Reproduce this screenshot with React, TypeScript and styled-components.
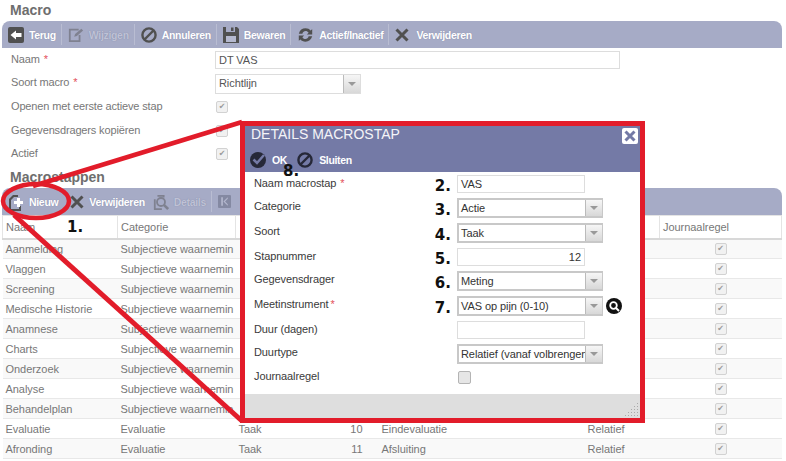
import React from "react";
import styled, { createGlobalStyle } from "styled-components";

const Global = createGlobalStyle`
  html, body { margin: 0; padding: 0; background: #fff; }
  body { font-family: "Liberation Sans", Arial, sans-serif; font-size: 11px; color: #777; }
`;

const Page = styled.div`
  position: relative;
  width: 786px;
  height: 461px;
  overflow: hidden;
  padding: 0 4px 0 2px;
  box-sizing: border-box;
`;
const Title = styled.h2`
  margin: 0;
  padding: 2px 0 0 8px;
  font-size: 14px;
  line-height: 16px;
  font-weight: bold;
  color: #6e6e6e;
  height: 21px;
  box-sizing: border-box;
`;
const SectionTitle = styled(Title)`
  height: 20px;
  padding-top: 1px;
`;
const Toolbar = styled.div`
  display: flex;
  align-items: center;
  height: 27px;
  background: #a6abc6;
  border-radius: 8px 8px 0 0;
  padding-left: 6px;
`;
const ToolButton = styled.div<{ $off?: boolean; $sep?: boolean; $tight?: boolean }>`
  display: flex;
  align-items: center;
  gap: 5px;
  height: 21px;
  padding-right: 5px;
  margin-right: ${(p) => (p.$tight ? 2 : 6)}px;
  border-right: ${(p) => (p.$sep === false ? "1px solid transparent" : "1px solid #b9bdd2")};
  color: ${(p) => (p.$off ? "#bfc2d6" : "#fff")};
  font-size: 10.5px;
  font-weight: bold;
  letter-spacing: -0.32px;
  text-shadow: 0 0 1px #7f84a3;
  white-space: nowrap;
  svg { flex: none; opacity: ${(p) => (p.$off ? 0.45 : 1)}; }
`;
const FormGrid = styled.div`
  display: flex;
  flex-direction: column;
  height: 120px;
`;
const FormRow = styled.div<{ $h: number }>`
  display: grid;
  grid-template-columns: 213px 1fr;
  align-items: center;
  height: ${(p) => p.$h}px;
`;
const FieldLabel = styled.div`
  padding-left: 9px;
  letter-spacing: -0.15px;
  color: #777;
  margin-top: -1px;
`;
const Req = styled.span<{ $near?: boolean }>`
  color: #e3505a;
  margin-left: ${(p) => (p.$near ? 2 : 4)}px;
`;
const TextBox = styled.div<{ $w: number; $right?: boolean; $dark?: boolean }>`
  width: ${(p) => p.$w}px;
  height: 18px;
  box-sizing: border-box;
  border: 1px solid #ddd;
  background: #fff;
  color: ${(p) => (p.$dark ? "#333" : "#555")};
  padding: 0 3px;
  line-height: 16px;
  font-size: 11px;
  letter-spacing: -0.05px;
  text-align: ${(p) => (p.$right ? "right" : "left")};
`;
const Select = styled.div<{ $w: number; $thick?: boolean }>`
  display: flex;
  width: ${(p) => p.$w}px;
  height: 20px;
  box-sizing: border-box;
  border-style: solid;
  border-width: ${(p) => (p.$thick ? "2px 1px 2px 2px" : "1px")};
  border-color: ${(p) => (p.$thick ? "#c8c8c8" : "#ddd")};
  background: #fff;
  margin-top: ${(p) => (p.$thick ? 0 : 3)}px;
`;
const SelectText = styled.div<{ $dark?: boolean }>`
  flex: 1;
  min-width: 0;
  padding-left: ${(p) => (p.$dark ? 2 : 3)}px;
  line-height: 16px;
  font-size: 11px;
  letter-spacing: -0.08px;
  white-space: nowrap;
  overflow: hidden;
  color: ${(p) => (p.$dark ? "#333" : "#555")};
  border-right: 1px solid #bbb;
`;
const SelectArrow = styled.div`
  flex: none;
  width: 16px;
  display: flex;
  align-items: center;
  justify-content: center;
  background: linear-gradient(#f6f6f6, #d8d8d8);
  &::after {
    content: "";
    border: 4px solid transparent;
    border-top: 4px solid #999;
    border-bottom: 0;
  }
`;
const Check = styled.div<{ $on?: boolean }>`
  width: 10px;
  height: 10px;
  border: 1px solid #d2d2d2;
  border-radius: 2px;
  background: #f1f1f1;
  display: flex;
  align-items: center;
  justify-content: center;
  &::after {
    content: ${(p) => (p.$on ? '"✔"' : '""')};
    font-family: "DejaVu Sans", sans-serif;
    font-size: 8px;
    line-height: 10px;
    color: #9a9a9a;
  }
`;
const FormCheck = styled(Check)`
  margin: 1px 0 0 1px;
`;
const Table = styled.table`
  width: 779px;
  border-collapse: collapse;
  table-layout: fixed;
`;
const Th = styled.th`
  height: 23px;
  box-sizing: border-box;
  padding: 0 3px;
  text-align: left;
  font-weight: normal;
  color: #777;
  letter-spacing: -0.05px;
  border: 1px solid #e4e4e4;
  border-bottom: 2px solid #d8d8d8;
`;
const Tr = styled.tr<{ $odd: boolean }>`
  background: ${(p) => (p.$odd ? "#f9f9f9" : "#fff")};
`;
const Td = styled.td<{ $right?: boolean; $center?: boolean; $inset?: boolean }>`
  height: 20px;
  box-sizing: border-box;
  padding: 0 3px 0 ${(p) => (p.$inset ? 16 : 3)}px;
  color: #777;
  letter-spacing: -0.04px;
  border-bottom: 1px solid #e8e8e8;
  white-space: nowrap;
  overflow: hidden;
  text-align: ${(p) => (p.$right ? "right" : "left")};
  ${(p) => (p.$center ? "& > div { margin: 0 auto; }" : "")}
`;
const Modal = styled.div`
  position: absolute;
  left: 240px;
  top: 121px;
  width: 405px;
  height: 302px;
  box-sizing: border-box;
  border: 5px solid #e21c2a;
  background: #fff;
  display: flex;
  flex-direction: column;
  z-index: 2;
`;
const ModalHead = styled.div`
  height: 46px;
  flex: none;
  background: #747aa6;
  position: relative;
  display: flex;
  flex-direction: column;
`;
const ModalTitle = styled.div`
  height: 23px;
  padding: 1px 0 0 6px;
  box-sizing: border-box;
  color: #f4f4f8;
  font-size: 14px;
  line-height: 15px;
`;
const CloseBox = styled.div`
  position: absolute;
  right: 2px;
  top: 2px;
  width: 16px;
  height: 16px;
  background: #fff;
  border-radius: 2px;
  display: flex;
  align-items: center;
  justify-content: center;
`;
const ModalTools = styled.div`
  display: flex;
  align-items: center;
  gap: 6px;
  padding: 0 0 2px 5px;
  height: 23px;
  box-sizing: border-box;
  color: #fff;
  font-weight: bold;
  font-size: 10.5px;
  letter-spacing: -0.32px;
`;
const ModalToolText = styled.span`
  margin-right: 4px;
`;
const ModalBody = styled.div`
  flex: 1;
  padding-top: 1px;
  display: flex;
  flex-direction: column;
`;
const MRow = styled.div<{ $h: number }>`
  display: grid;
  grid-template-columns: 212px 1fr;
  align-items: center;
  height: ${(p) => p.$h}px;
`;
const MLabelCell = styled.div`
  display: flex;
  justify-content: space-between;
  align-items: center;
  padding: 0 6px 0 9px;
`;
const MLabel = styled.div<{ $up?: boolean }>`
  color: #3a3a3a;
  letter-spacing: -0.1px;
  margin-top: ${(p) => (p.$up ? -4 : -2)}px;
`;
const Num = styled.div`
  font-family: "DejaVu Sans", sans-serif;
  font-weight: bold;
  font-size: 15px;
  line-height: 16px;
  color: #111;
  margin-top: 4px;
`;
const MField = styled.div`
  display: flex;
  align-items: center;
  gap: 3px;
`;
const ModalCheck = styled(Check)`
  margin-left: 1px;
  width: 11px;
  height: 11px;
  border-color: #b4b4b4;
  background: #e6e6e6;
`;
const ModalFoot = styled.div`
  flex: none;
  height: 23px;
  background: #dedede;
  display: flex;
  justify-content: flex-end;
  align-items: flex-end;
  padding: 0 1px 1px 0;
`;
const AbsNum = styled(Num)<{ $x: number; $y: number }>`
  position: absolute;
  left: ${(p) => p.$x}px;
  top: ${(p) => p.$y}px;
  margin: 0;
  z-index: 4;
`;
const Overlay = styled.svg`
  position: absolute;
  left: 0;
  top: 0;
  z-index: 3;
  pointer-events: none;
`;

const D = "#505050";
const Back = () => (
  <svg width="16" height="16" viewBox="0 0 16 16">
    <rect width="16" height="16" rx="2" fill={D} />
    <path d="M2.5 8 8 3.5V6h5.5v4H8v2.5z" fill="#fff" />
  </svg>
);
const Edit = () => (
  <svg width="16" height="16" viewBox="0 0 18 18" fill="none" stroke={D} strokeWidth="2">
    <path d="M12 3H2v13h11V9" />
    <path d="M7 11l1-3 7-6 2 2-7 6z" fill={D} stroke="none" />
  </svg>
);
const Ban = ({ c = D, s = 16 }: { c?: string; s?: number }) => (
  <svg width={s} height={s} viewBox="0 0 16 16" fill="none" stroke={c} strokeWidth="2.4">
    <circle cx="8" cy="8" r="6.6" />
    <path d="M3.5 12.5 12.5 3.5" />
  </svg>
);
const Floppy = () => (
  <svg width="16" height="16" viewBox="0 0 16 16">
    <path d="M0 0h3v5h9V0h2l2 2v14H0z" fill={D} />
    <rect x="3" y="9" width="10" height="6" fill="#b5b9cf" />
    <rect x="8" y="0.5" width="2.5" height="3.5" fill={D} />
  </svg>
);
const Sync = () => (
  <svg width="17" height="16" viewBox="0 0 19 17" fill={D}>
    <path d="M2 7C3 3 6 1 9.5 1c2.5 0 4.5 1 5.5 2.5L17 2v6h-6l2-2c-1-1.5-2-2-3.5-2C8 4 6.5 5 6 7z" />
    <path d="M17 10c-1 4-4 6-7.5 6-2.5 0-4.5-1-5.5-2.5L2 15V9h6l-2 2c1 1.5 2 2 3.5 2 1.5 0 3-1 3.5-3z" />
  </svg>
);
const Cross = ({ c = D, w = 16, h = 14 }: { c?: string; w?: number; h?: number }) => (
  <svg width={w} height={h} viewBox={`0 0 ${w} ${h}`} fill="none" stroke={c} strokeWidth="3">
    <path d={`M1.5 1.5 ${h - 1.5} ${h - 1.5}M${h - 1.5} 1.5 1.5 ${h - 1.5}`} />
  </svg>
);
const NewDoc = () => (
  <svg width="16" height="18" viewBox="0 0 16 18">
    <path d="M5 2h5v2H6L3 7v9h8v-3h2v5H1V6z" fill={D} />
    <path d="M9 5h3v3h3v3h-3v3H9v-3H6V8h3z" fill="#fff" />
  </svg>
);
const Lens = () => (
  <svg width="16" height="18" viewBox="0 0 18 18" fill="none" stroke={D} strokeWidth="2">
    <path d="M5 2h7v2M2 6v11h8" />
    <circle cx="9" cy="9" r="4.5" />
    <path d="M12.5 12.5 17 17" strokeWidth="3" />
  </svg>
);
const First = () => (
  <svg width="13" height="13" viewBox="0 0 12 12">
    <rect width="12" height="12" rx="1" fill="#5d6078" />
    <path d="M3 2h1.5v8H3zM9 2v1.5L6.5 6 9 8.5V10L5 6z" fill="#c8cada" />
  </svg>
);
const OkIcon = () => (
  <svg width="16" height="16" viewBox="0 0 16 16">
    <circle cx="8" cy="8" r="8" fill="#262838" />
    <path d="M3.5 7.5 7 11l7-8" fill="none" stroke="#747aa6" strokeWidth="2.5" />
  </svg>
);
const Search = () => (
  <svg width="16" height="16" viewBox="0 0 16 16">
    <circle cx="8" cy="8" r="8" fill="#111" />
    <circle cx="7.5" cy="7.5" r="3.3" fill="none" stroke="#fff" strokeWidth="1.8" />
    <path d="M10 10l3 3" stroke="#fff" strokeWidth="2" />
  </svg>
);
const Grip = () => (
  <svg width="15" height="15" viewBox="0 0 15 15" fill="#aaa">
    {[0, 1, 2, 3, 4].flatMap((r) =>
      [0, 1, 2, 3, 4]
        .filter((c) => c + r >= 4)
        .map((c) => <rect key={`${r}-${c}`} x={c * 3 + 1} y={r * 3 + 1} width="1" height="1" />)
    )}
  </svg>
);

const SW = "Subjectieve waarnemin";
const rows = [
  { naam: "Aanmelding", cat: SW },
  { naam: "Vlaggen", cat: SW },
  { naam: "Screening", cat: SW },
  { naam: "Medische Historie", cat: SW },
  { naam: "Anamnese", cat: SW },
  { naam: "Charts", cat: SW },
  { naam: "Onderzoek", cat: SW },
  { naam: "Analyse", cat: SW },
  { naam: "Behandelplan", cat: SW },
  { naam: "Evaluatie", cat: "Evaluatie", soort: "Taak", nr: "10", oms: "Eindevaluatie", duur: "Relatief" },
  { naam: "Afronding", cat: "Evaluatie", soort: "Taak", nr: "11", oms: "Afsluiting", duur: "Relatief" },
];

export default function App() {
  return (
    <Page>
      <Global />
      <Title>Macro</Title>
      <Toolbar>
        <ToolButton><Back />Terug</ToolButton>
        <ToolButton $off><Edit />Wijzigen</ToolButton>
        <ToolButton><Ban />Annuleren</ToolButton>
        <ToolButton><Floppy />Bewaren</ToolButton>
        <ToolButton><Sync />Actief/Inactief</ToolButton>
        <ToolButton $sep={false}><Cross />Verwijderen</ToolButton>
      </Toolbar>
      <FormGrid>
        <FormRow $h={23}>
          <FieldLabel>Naam<Req>*</Req></FieldLabel>
          <TextBox $w={405}>DT VAS</TextBox>
        </FormRow>
        <FormRow $h={23}>
          <FieldLabel>Soort macro<Req>*</Req></FieldLabel>
          <Select $w={146}><SelectText>Richtlijn</SelectText><SelectArrow /></Select>
        </FormRow>
        <FormRow $h={25}>
          <FieldLabel>Openen met eerste actieve stap</FieldLabel>
          <FormCheck $on />
        </FormRow>
        <FormRow $h={23}>
          <FieldLabel>Gegevensdragers kopiëren</FieldLabel>
          <FormCheck $on />
        </FormRow>
        <FormRow $h={23}>
          <FieldLabel>Actief</FieldLabel>
          <FormCheck $on />
        </FormRow>
      </FormGrid>
      <SectionTitle>Macrostappen</SectionTitle>
      <Toolbar>
        <ToolButton $sep={false}><NewDoc />Nieuw</ToolButton>
        <ToolButton $sep={false} $tight><Cross w={14} />Verwijderen</ToolButton>
        <ToolButton $off><Lens />Details</ToolButton>
        <ToolButton $off $sep={false}><First /></ToolButton>
      </Toolbar>
      <Table>
        <colgroup>
          <col width="115" />
          <col width="118" />
          <col width="100" />
          <col width="30" />
          <col width="219" />
          <col width="75" />
          <col width="122" />
        </colgroup>
        <thead>
          <tr>
            <Th>Naam</Th>
            <Th>Categorie</Th>
            <Th />
            <Th />
            <Th />
            <Th />
            <Th>Journaalregel</Th>
          </tr>
        </thead>
        <tbody>
          {rows.map((r, i) => (
            <Tr key={r.naam} $odd={i % 2 === 0}>
              <Td>{r.naam}</Td>
              <Td>{r.cat}</Td>
              <Td>{r.soort}</Td>
              <Td $right>{r.nr}</Td>
              <Td $inset>{r.oms}</Td>
              <Td>{r.duur}</Td>
              <Td $center><Check $on /></Td>
            </Tr>
          ))}
        </tbody>
      </Table>

      <Overlay width="786" height="461" viewBox="0 0 786 461">
        <path d="M242 122 33 186" stroke="#e21c2a" strokeWidth="4.5" fill="none" />
        <path d="M242 421 14 215" stroke="#e21c2a" strokeWidth="5" fill="none" />
        <ellipse cx="36" cy="201" rx="33" ry="17" stroke="#e21c2a" strokeWidth="4.5" fill="none" />
      </Overlay>
      <AbsNum $x={67} $y={219}>1.</AbsNum>
      <AbsNum $x={283} $y={163}>8.</AbsNum>

      <Modal>
        <ModalHead>
          <ModalTitle>DETAILS MACROSTAP</ModalTitle>
          <CloseBox><Cross c="#747aa6" w={12} h={12} /></CloseBox>
          <ModalTools>
            <OkIcon /><ModalToolText>OK</ModalToolText>
            <Ban c="#262838" /><ModalToolText>Sluiten</ModalToolText>
          </ModalTools>
        </ModalHead>
        <ModalBody>
          <MRow $h={22}>
            <MLabelCell><MLabel>Naam macrostap<Req>*</Req></MLabel><Num>2.</Num></MLabelCell>
            <MField><TextBox $w={128} $dark>VAS</TextBox></MField>
          </MRow>
          <MRow $h={25}>
            <MLabelCell><MLabel $up>Categorie</MLabel><Num>3.</Num></MLabelCell>
            <MField><Select $w={146} $thick><SelectText $dark>Actie</SelectText><SelectArrow /></Select></MField>
          </MRow>
          <MRow $h={25}>
            <MLabelCell><MLabel $up>Soort</MLabel><Num>4.</Num></MLabelCell>
            <MField><Select $w={146} $thick><SelectText $dark>Taak</SelectText><SelectArrow /></Select></MField>
          </MRow>
          <MRow $h={24}>
            <MLabelCell><MLabel>Stapnummer</MLabel><Num>5.</Num></MLabelCell>
            <MField><TextBox $w={128} $right $dark>12</TextBox></MField>
          </MRow>
          <MRow $h={24}>
            <MLabelCell><MLabel $up>Gegevensdrager</MLabel><Num>6.</Num></MLabelCell>
            <MField><Select $w={146} $thick><SelectText $dark>Meting</SelectText><SelectArrow /></Select></MField>
          </MRow>
          <MRow $h={25}>
            <MLabelCell><MLabel $up>Meetinstrument<Req $near>*</Req></MLabel><Num>7.</Num></MLabelCell>
            <MField><Select $w={146} $thick><SelectText $dark>VAS op pijn (0-10)</SelectText><SelectArrow /></Select><Search /></MField>
          </MRow>
          <MRow $h={24}>
            <MLabelCell><MLabel>Duur (dagen)</MLabel></MLabelCell>
            <MField><TextBox $w={128} $dark /></MField>
          </MRow>
          <MRow $h={23}>
            <MLabelCell><MLabel $up>Duurtype</MLabel></MLabelCell>
            <MField><Select $w={146} $thick><SelectText $dark>Relatief (vanaf volbrengen)</SelectText><SelectArrow /></Select></MField>
          </MRow>
          <MRow $h={24}>
            <MLabelCell><MLabel>Journaalregel</MLabel></MLabelCell>
            <MField><ModalCheck /></MField>
          </MRow>
        </ModalBody>
        <ModalFoot><Grip /></ModalFoot>
      </Modal>
    </Page>
  );
}
